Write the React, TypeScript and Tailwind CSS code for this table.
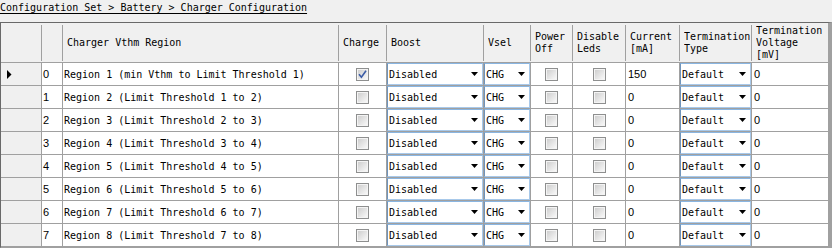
type Row = {
  index: number;
  region: string;
  charge: boolean;
  current: string;
};

const rows: Row[] = Array.from({ length: 8 }, (_, i) => ({
  index: i,
  region:
    i === 0
      ? "Region 1 (min Vthm to Limit Threshold 1)"
      : `Region ${i + 1} (Limit Threshold ${i} to ${i + 1})`,
  charge: i === 0,
  current: i === 0 ? "150" : "0",
}));

// widths include the 1px grid line on the right of each cell
const headers = [
  { title: "", width: "w-[41px]" },
  { title: "", width: "w-[21px]" },
  { title: "Charger Vthm Region", width: "w-[276px]" },
  { title: "Charge", width: "w-[48px]" },
  { title: "Boost", width: "w-[97px]" },
  { title: "Vsel", width: "w-[47px]" },
  { title: "Power\nOff", width: "w-[42px]" },
  { title: "Disable\nLeds", width: "w-[53px]" },
  { title: "Current\n[mA]", width: "w-[54px]" },
  { title: "Termination\nType", width: "w-[72px]" },
  { title: "Termination\nVoltage\n[mV]", width: "w-[76px]" },
];

const mono = "font-['DejaVu_Sans_Mono',monospace] text-[10px]";
const sans = "font-['Liberation_Sans',Arial,sans-serif] text-[11px]";

function CheckBox({ checked }: { checked?: boolean }) {
  return (
    <div className="h-[13px] w-[13px] border border-[#8e8f8f] bg-[#f4f4f4] p-[1px]">
      <div className="relative h-full w-full bg-linear-to-br from-[#cfcfcf] to-[#f8f8f8]">
        {checked ? (
          <svg className="absolute inset-0" width="9" height="9" viewBox="0 0 9 9">
            <path d="M1 4.2 3.4 7.2 8 0.8" fill="none" stroke="#3b5ca6" strokeWidth="1.6" />
          </svg>
        ) : null}
      </div>
    </div>
  );
}

function ComboBox({ value }: { value: string }) {
  return (
    <div className="flex h-full w-full items-center justify-between border border-[#a8c9ea] border-l-[#6f94bb] border-t-[#8ab6e2] bg-white pl-[1px] pr-[4px]">
      <span className={mono}>{value}</span>
      <svg width="7" height="4" viewBox="0 0 7 4">
        <path d="M0 0h7L3.5 4z" fill="#000" />
      </svg>
    </div>
  );
}

function Cell({ width, className = "", children }: { width: string; className?: string; children?: React.ReactNode }) {
  return (
    <div className={`${width} flex h-full shrink-0 items-center overflow-hidden whitespace-nowrap border-r border-[#a0a0a0] ${className}`}>
      {children}
    </div>
  );
}

export default function App() {
  return (
    <div className="h-[248px] w-[832px] overflow-hidden bg-[#f0f0f0] text-black">
      <div className={`h-[22px] leading-[15px] ${mono}`}>
        <span className="underline underline-offset-2">Configuration Set &gt; Battery &gt; Charger Configuration</span>
      </div>

      <div className="border-l border-t border-b border-r-4 border-[#a0a0a0] border-l-[#696969] border-t-[#696969]">
        <div className="flex h-[40px] border-b border-[#a0a0a0] pb-[1px] pt-[2px]">
          {headers.map((h, i) => (
            <div
              key={i}
              className={`${h.width} flex h-full shrink-0 items-center overflow-hidden pl-[4px] ${
                i === headers.length - 1 ? "" : "border-r border-[#a0a0a0]"
              }`}
            >
              <div className={`overflow-hidden whitespace-pre leading-[12px] ${mono}`}>{h.title}</div>
            </div>
          ))}
        </div>

        {rows.map((row) => (
          <div key={row.index} className="flex h-[23px] border-b border-[#a0a0a0] bg-white">
            <Cell width="w-[41px]" className="bg-[#f0f0f0] pl-[6px]">
              {row.index === 0 ? (
                <svg width="5" height="9" viewBox="0 0 5 9">
                  <path d="M0 0 4.5 4.5 0 9z" fill="#000" />
                </svg>
              ) : null}
            </Cell>
            <Cell width="w-[21px]" className={`pl-[1px] ${sans}`}>
              {row.index}
            </Cell>
            <Cell width="w-[276px]" className={`pl-[1px] ${mono}`}>
              {row.region}
            </Cell>
            <Cell width="w-[48px]" className="justify-center">
              <CheckBox checked={row.charge} />
            </Cell>
            <Cell width="w-[97px]">
              <ComboBox value="Disabled" />
            </Cell>
            <Cell width="w-[47px]">
              <ComboBox value="CHG" />
            </Cell>
            <Cell width="w-[42px]" className="justify-center">
              <CheckBox />
            </Cell>
            <Cell width="w-[53px]" className="justify-center">
              <CheckBox />
            </Cell>
            <Cell width="w-[54px]" className={`pl-[2px] ${sans}`}>
              {row.current}
            </Cell>
            <Cell width="w-[72px]">
              <ComboBox value="Default" />
            </Cell>
            <div className={`flex h-full w-[76px] shrink-0 items-center pl-[2px] ${sans}`}>0</div>
          </div>
        ))}
      </div>
    </div>
  );
}
